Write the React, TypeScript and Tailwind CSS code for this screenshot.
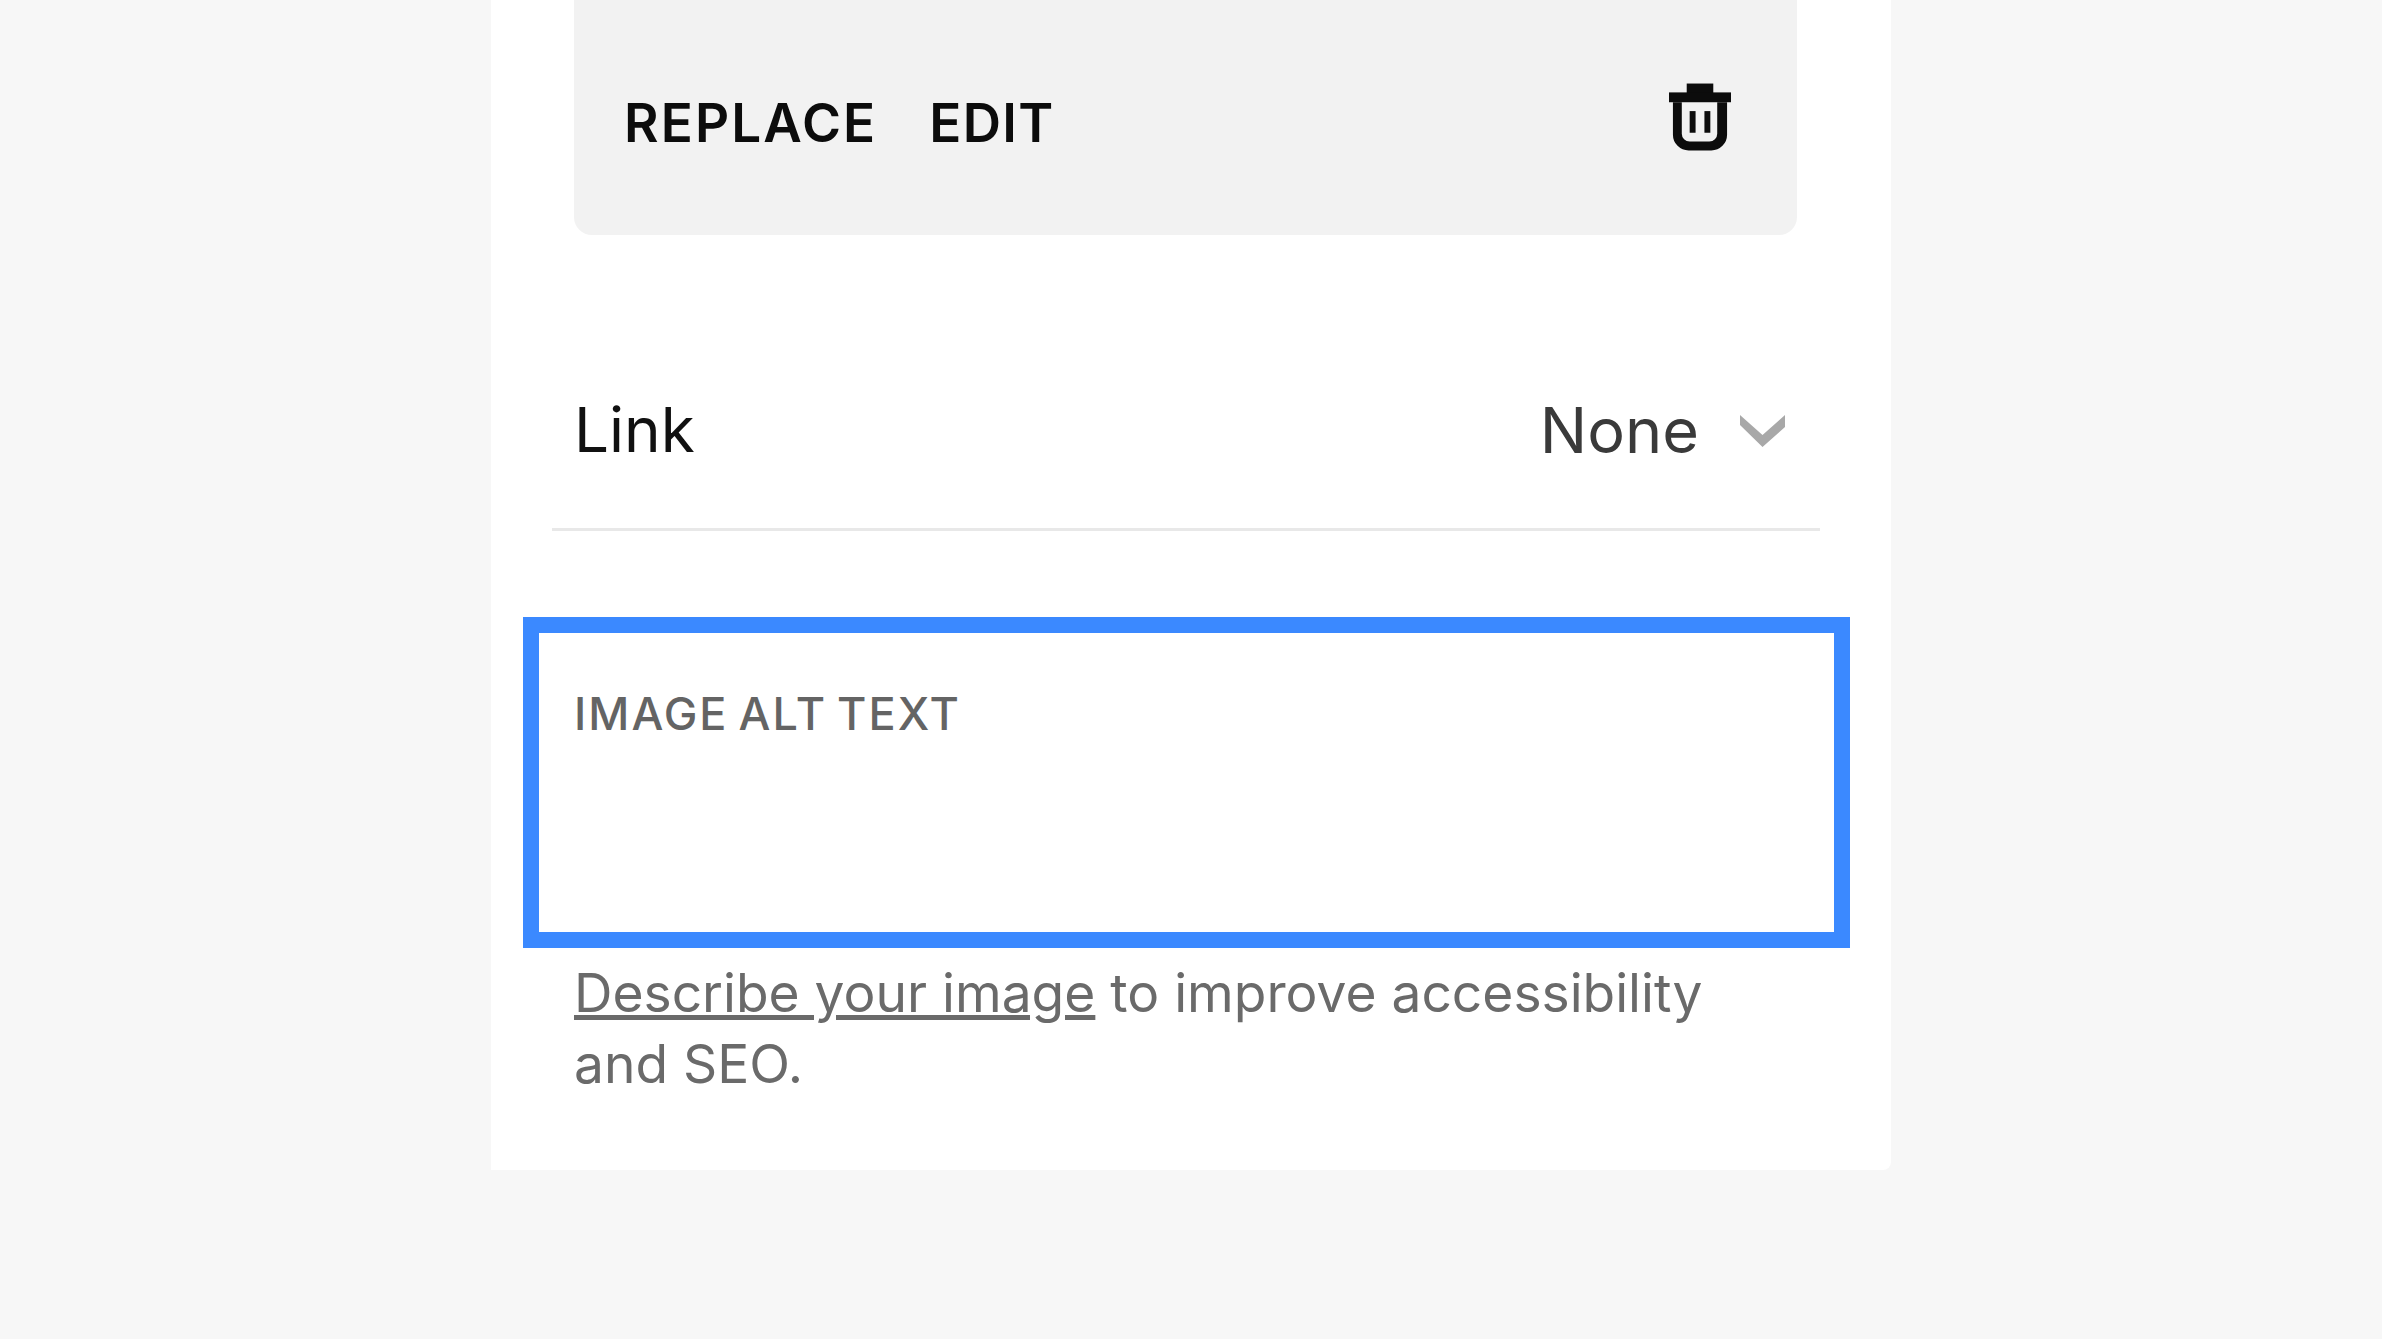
export default function App() {
  return (
    <div className="flex h-[1339px] justify-center overflow-hidden bg-[#f7f7f7] font-['Inter',sans-serif]">
      <div className="h-[1170px] w-[1400px] rounded-br-[8px] bg-white">
        {/* Image toolbar card */}
        <div className="ml-[83px] flex h-[235px] w-[1223px] items-start justify-between rounded-b-[18px] bg-[#f2f2f2] pl-[50px] pr-[66px]">
          <div className="mt-[93px] flex gap-[52px] text-[53px] leading-[60px] font-semibold text-[#0c0c0c]">
            <span className="tracking-[0.04em]">REPLACE</span>
            <span className="tracking-[0.025em]">EDIT</span>
          </div>
          <svg viewBox="0 0 63 68" className="mt-[83px] h-[68px] w-[62px]" fill="#0c0c0c">
            <rect x="18" y="0" width="27" height="10" />
            <rect x="0" y="9" width="63" height="10" />
            <path
              fillRule="evenodd"
              d="M4 19H59V52a16 16 0 0 1-16 16H20a16 16 0 0 1-16-16ZM13 19V51a8 8 0 0 0 8 8H41a8 8 0 0 0 8-8V19Z"
            />
            <rect x="21" y="28" width="6" height="22" />
            <rect x="36" y="28" width="6" height="22" />
          </svg>
        </div>

        {/* Link row */}
        <div className="mt-[159px] ml-[61px] flex h-[137px] w-[1268px] items-start justify-between border-b-[3px] border-[#e8e8e8] pl-[22px] pr-[35px]">
          <span className="text-[62px] leading-[72px] text-[#111111]">Link</span>
          <div className="flex items-start">
            <span className="text-[63px] leading-[72px] text-[#3a3a3a]">None</span>
            <svg viewBox="0 0 45 32" className="mt-[21px] ml-[41px] h-[32px] w-[45px]" fill="#a8a8a8">
              <path d="M0 0L22.5 20L45 0V12L22.5 32L0 10Z" />
            </svg>
          </div>
        </div>

        {/* Highlighted alt text field */}
        <div className="mt-[86px] ml-[32px] h-[331px] w-[1327px] border-[16px] border-[#3b89ff] pl-[35px] pt-[55px]">
          <div className="text-[45px] leading-[52px] font-medium tracking-[0.045em] [word-spacing:-4px] text-[#646464]">
            IMAGE ALT TEXT
          </div>
        </div>
        <p className="mt-[9px] ml-[83px] w-[1180px] text-[53.3px] leading-[71px] text-[#6a6a6a]">
          <span className="underline">Describe your image</span> to improve accessibility and SEO.
        </p>
      </div>
    </div>
  );
}
